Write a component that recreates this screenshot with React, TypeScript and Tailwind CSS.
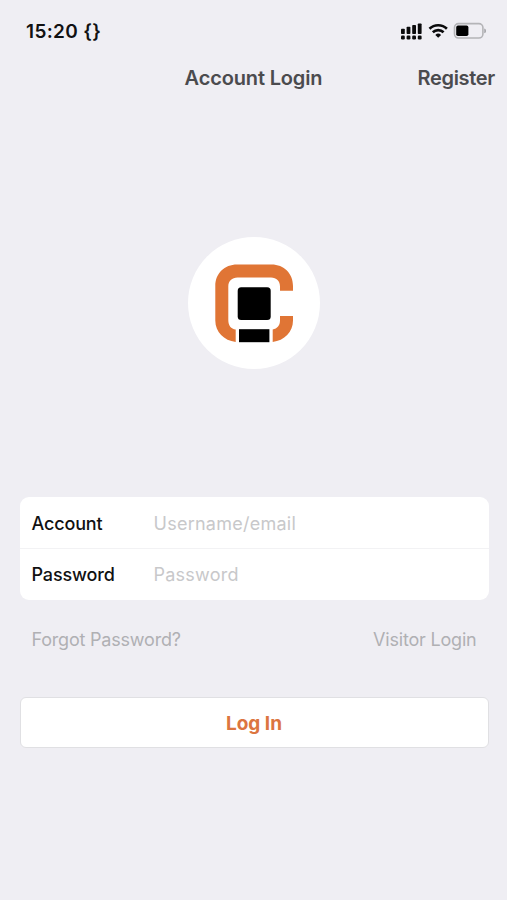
import React, { useState } from 'react';

const StatusIcons: React.FC = () => (
    <svg className="block" width="86" height="18" viewBox="0 0 86 18" fill="none">
        {/* Sinal */}
        <g fill="#0b0b0c">
            <rect x="1" y="6.7" width="3.8" height="5.4" rx="0.8" />
            <rect x="6.6" y="4.8" width="3.8" height="7.3" rx="0.8" />
            <rect x="12.2" y="3.1" width="3.8" height="9" rx="0.8" />
            <rect x="17.8" y="1.4" width="3.8" height="10.7" rx="0.8" />
            <rect x="1" y="13.6" width="3.8" height="3.8" rx="1.2" />
            <rect x="6.6" y="13.6" width="3.8" height="3.8" rx="1.2" />
            <rect x="12.2" y="13.6" width="3.8" height="3.8" rx="1.2" />
            <rect x="17.8" y="13.6" width="3.8" height="3.8" rx="1.2" />
        </g>
        {/* Wi-Fi */}
        <g stroke="#0b0b0c" strokeWidth="2.6">
            <path d="M29.5 6.8a12.4 12.4 0 0 1 17.4 0" />
            <path d="M32.8 10.3a7.7 7.7 0 0 1 10.8 0" />
        </g>
        <path d="M38.2 15.8l-2.9-2.9a4.3 4.3 0 0 1 5.8 0z" fill="#0b0b0c" />
        {/* Bateria */}
        <rect x="54.5" y="1.6" width="28.4" height="14.4" rx="4" stroke="#b4b4b7" strokeWidth="1.6" />
        <rect x="56.2" y="3.6" width="12.2" height="10.5" rx="1.8" fill="#000" />
        <path d="M84.2 6.6c1.6.6 2.1 1.3 2.1 2.3s-.5 1.7-2.1 2.3z" fill="#a9a9ad" />
    </svg>
);

const Logo: React.FC = () => (
    <svg className="block" width="132" height="132" viewBox="0 0 132 132">
        <path
            fill="#e07535"
            d="M47.7 105C36 103.5 27.3 95 27.3 83.5V49C27.3 36.5 36.5 27.5 49 27.5H83.5C96 27.5 105 36.5 105 49V53.7H92V49.5C92 44 88.5 40.5 83 40.5H49.5C44 40.5 40.3 44 40.3 49.5V83C40.3 88.5 43 92 47.7 92.5ZM84.7 105V92.5C89.3 91.7 92 88.5 92 83.5V79H105V83.5C105 95 96.3 103.5 84.7 105Z"
        />
        <rect x="49.7" y="50.2" width="33" height="32.8" rx="3.5" fill="#000" />
        <rect x="51" y="92.2" width="30.4" height="13" fill="#000" />
    </svg>
);

interface FieldProps {
    label: string;
    placeholder: string;
    type: string;
    value: string;
    onChange: (value: string) => void;
}

const Field: React.FC<FieldProps> = ({ label, placeholder, type, value, onChange }) => (
    <label className="flex h-[51px] items-center px-3 first:pt-px last:pb-px">
        <span className="w-[122px] text-[18px] font-medium tracking-[-0.15px] text-[#111112]">{label}</span>
        <input
            type={type}
            value={value}
            onChange={(e) => onChange(e.target.value)}
            placeholder={placeholder}
            className="min-w-0 flex-1 bg-transparent text-[18px] tracking-[0.25px] text-[#111112] outline-none placeholder:text-[#c8c8ca]"
        />
    </label>
);

export default function App() {
    const [account, setAccount] = useState('');
    const [password, setPassword] = useState('');

    return (
        <div className="flex min-h-screen flex-col bg-[#efeef3] font-['Inter',sans-serif]">
            <div className="flex h-[62px] items-center justify-between pl-[26px] pr-[21px]">
                <span className="pt-0.5 text-[19px] font-semibold tracking-[0.35px] text-[#111112]">15:20 {'{}'}</span>
                <StatusIcons />
            </div>

            <header className="grid h-8 grid-cols-[1fr_auto_1fr] items-center px-3 text-[20px] font-semibold text-[#4b4b4e]">
                <h1 className="col-start-2 tracking-[-0.15px]">Account Login</h1>
                <button className="justify-self-end tracking-[-0.3px]">Register</button>
            </header>

            <div className="mx-auto mt-[143px] size-[132px] rounded-full bg-white">
                <Logo />
            </div>

            <form className="mt-32 flex flex-col pl-[19.5px] pr-[18.5px]" onSubmit={(e) => e.preventDefault()}>
                <div className="rounded-[9px] bg-white">
                    <Field label="Account" placeholder="Username/email" type="text" value={account} onChange={setAccount} />
                    <div className="h-px bg-[#f2f2f4]" />
                    <Field label="Password" placeholder="Password" type="password" value={password} onChange={setPassword} />
                </div>

                <div className="mt-[25px] flex h-7 items-center justify-between px-3 text-[18px] tracking-[-0.2px] text-[#b0b0b3]">
                    <button type="button">Forgot Password?</button>
                    <button type="button">Visitor Login</button>
                </div>

                <button
                    type="submit"
                    className="mt-11 h-[51px] rounded-md border border-[#e0e0e3] bg-white pt-[3px] text-[19px] font-bold text-[#dc7540]"
                >
                    Log In
                </button>
            </form>
        </div>
    );
}
